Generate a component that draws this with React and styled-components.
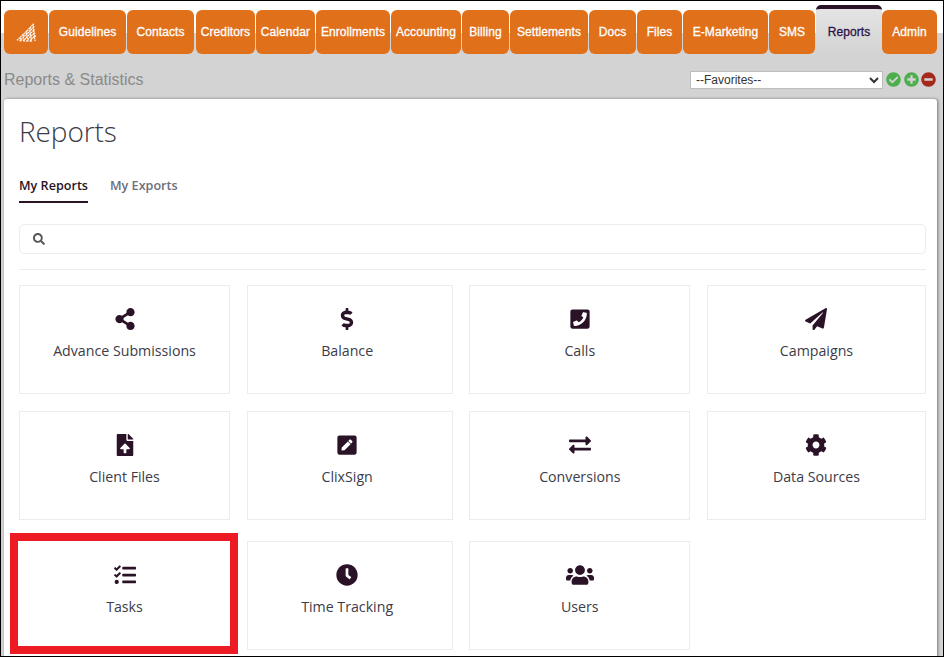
import React from "react";
import styled, { createGlobalStyle } from "styled-components";
import {
  FaShareAlt, FaDollarSign, FaPhoneSquare, FaPaperPlane, FaFileUpload, FaPenSquare,
  FaExchangeAlt, FaCog, FaTasks, FaClock, FaUsers, FaSearch, FaCheckCircle, FaPlusCircle, FaMinusCircle,
} from "react-icons/fa";

const Global = createGlobalStyle`
  html, body { margin: 0; padding: 0; background: #fff; }
  * { box-sizing: border-box; }
`;

const Frame = styled.div`
  width: 944px;
  height: 657px;
  border: 1px solid #000;
  overflow: hidden;
  background: linear-gradient(#fff 32px, #d3d3d3 32px);
  font-family: "Liberation Sans", Arial, sans-serif;
`;

const Nav = styled.nav`
  display: flex;
  align-items: flex-start;
  height: 44px;
  margin-top: 9px;
  padding-left: 3px;
`;

const Tab = styled.a`
  flex: none;
  width: ${(p) => p.$w}px;
  margin-right: ${(p) => p.$gap ?? 1}px;
  height: ${(p) => (p.$active ? 49 : 44)}px;
  margin-top: ${(p) => (p.$active ? -5 : 0)}px;
  display: flex;
  align-items: center;
  justify-content: center;
  font-size: 12px;
  font-weight: 400;
  letter-spacing: 0.08px;
  -webkit-text-stroke: 0.3px currentColor;
  color: ${(p) => (p.$active ? "#2b1248" : "#fff")};
  background: ${(p) => (p.$active ? "linear-gradient(#e4e4e4, #d3d3d3)" : "#e1701a")};
  border-top: ${(p) => (p.$active ? "4px solid #2b1327" : "none")};
  border-radius: ${(p) => (p.$active ? "5px 5px 0 0" : "6px")};
`;

const Toolbar = styled.div`
  height: 45px;
  display: flex;
  align-items: center;
  padding: 6px 7px 0 3px;
`;

const PageTitle = styled.h2`
  flex: 1;
  margin: 0;
  font-size: 16px;
  font-weight: 400;
  color: #8a8a8a;
`;

const FavSelect = styled.select`
  width: 192.5px;
  height: 18px;
  margin-right: 3.5px;
  padding: 0 0 0 1px;
  border: 1px solid #bdbdbd;
  background: #fff;
  font-family: "Liberation Sans", Arial, sans-serif;
  font-size: 12px;
  color: #333;
`;

const StatusButton = styled.span`
  display: flex;
  margin-left: 2.5px;
  color: ${(p) => p.$color};
  font-size: 15px;
  &:first-of-type { margin-left: 0; }
`;

const Panel = styled.main`
  width: 933px;
  height: 600px;
  margin-left: 3px;
  padding: 0 10px 0 15px;
  background: #fff;
  border-radius: 3px;
  box-shadow: 1px 0 3px rgba(0, 0, 0, 0.45);
  font-family: "Open Sans", sans-serif;
`;

const Title = styled.h1`
  margin: 0;
  padding-top: 13px;
  height: 73px;
  font-size: 28px;
  line-height: 38px;
  font-weight: 300;
  letter-spacing: -0.1px;
  color: #3c3c48;
`;

const Tabs = styled.div`
  display: flex;
  gap: 22px;
  height: 31px;
`;

const SubTab = styled.a`
  height: 31px;
  padding-top: 5px;
  font-size: 12.6px;
  line-height: 17px;
  font-weight: 600;
  color: ${(p) => (p.$active ? "#2b1327" : "#6b6f7c")};
  border-bottom: ${(p) => (p.$active ? "2px solid #2b1327" : "none")};
`;

const Search = styled.div`
  height: 30px;
  width: 907px;
  margin-top: 21px;
  display: flex;
  align-items: center;
  padding-left: 13px;
  border: 1px solid #ececec;
  border-radius: 5px;
  color: #555;
  font-size: 12px;
`;

const Rule = styled.hr`
  width: 907px;
  margin: 15px 0;
  border: none;
  border-top: 1px solid #ececec;
`;

const Grid = styled.div`
  display: grid;
  grid-template-columns: 211px 206px 221px 219px;
  column-gap: 16.67px;
  grid-auto-rows: 109px;
  row-gap: 17px;
`;

const Card = styled.a`
  position: relative;
  margin: ${(p) => (p.$shift ? "4px 0 -4px" : "0")};
  display: flex;
  flex-direction: column;
  align-items: center;
  padding: 21px ${(p) => (p.$offset ? 5 : 0)}px 0 0;
  border: 1px solid ${(p) => (p.$bare ? "transparent" : "#ececec")};
  color: #3c3c48;
  font-size: 14.2px;
  font-weight: 500;
`;

const IconSlot = styled.span`
  height: 24px;
  display: flex;
  align-items: center;
  justify-content: center;
  font-size: ${(p) => p.$size ?? 22}px;
  color: #2b1327;
  margin-bottom: 10px;
`;

const Label = styled.span`
  line-height: 19px;
`;

const Highlight = styled.span`
  position: absolute;
  left: -10px;
  right: -9px;
  top: -9px;
  bottom: -5px;
  border: 8px solid #ed1c24;
  pointer-events: none;
`;

const Logo = () => (
  <svg width="21" height="19" viewBox="0 0 24 22" fill="none" stroke="#fff">
    <g strokeWidth="1.5" strokeDasharray="2 .6">
      <path d="M1 20 C8 14 16 6 20 1" />
      <path d="M4 21 C10 15 17 8 21 4" />
      <path d="M8 21 C13 16 18 10 21.5 8" />
      <path d="M12 21.500 C15 17 19 13 22 11.500" />
      <path d="M16 21.500 C18 18 20 16 23 15" />
    </g>
    <g strokeWidth="1.3" strokeDasharray="2 .6">
      <path d="M20 1 C20 8 21 15 22 21" />
      <path d="M16 5 C16 11 17 17 18 21.500" />
      <path d="M12 9 C12 13 13 18 14 21.500" />
      <path d="M8 13 C8 16 9 19 10 21.500" />
      <path d="M4.500 17 C5 19 5.500 20 6 21" />
    </g>
  </svg>
);

const tabs = [
  { w: 44, label: <Logo /> },
  { w: 77, label: "Guidelines" },
  { w: 67, label: "Contacts", gap: 2 },
  { w: 59, label: "Creditors" },
  { w: 59, label: "Calendar" },
  { w: 74, label: "Enrollments" },
  { w: 70, label: "Accounting" },
  { w: 47, label: "Billing" },
  { w: 78, label: "Settlements" },
  { w: 47, label: "Docs" },
  { w: 45, label: "Files" },
  { w: 85, label: "E-Marketing" },
  { w: 46, label: "SMS" },
  { w: 66, label: "Reports", active: true, gap: 0 },
  { w: 55, label: "Admin" },
];

const cards = [
  { label: "Advance Submissions", Icon: FaShareAlt },
  { label: "Balance", Icon: FaDollarSign, offset: true },
  { label: "Calls", Icon: FaPhoneSquare },
  { label: "Campaigns", Icon: FaPaperPlane },
  { label: "Client Files", Icon: FaFileUpload },
  { label: "ClixSign", Icon: FaPenSquare, offset: true },
  { label: "Conversions", Icon: FaExchangeAlt },
  { label: "Data Sources", Icon: FaCog },
  { label: "Tasks", Icon: FaTasks, highlight: true, shift: true },
  { label: "Time Tracking", Icon: FaClock, shift: true, offset: true },
  { label: "Users", Icon: FaUsers, size: 28, shift: true },
];

export default function App() {
  return (
    <Frame>
      <Global />
      <Nav>
        {tabs.map((t, i) => (
          <Tab key={i} $w={t.w} $gap={t.gap} $active={t.active}>{t.label}</Tab>
        ))}
      </Nav>
      <Toolbar>
        <PageTitle>Reports &amp; Statistics</PageTitle>
        <FavSelect defaultValue="fav"><option value="fav">--Favorites--</option></FavSelect>
        <StatusButton $color="#4cae4c"><FaCheckCircle /></StatusButton>
        <StatusButton $color="#4cae4c"><FaPlusCircle /></StatusButton>
        <StatusButton $color="#a5291b"><FaMinusCircle /></StatusButton>
      </Toolbar>
      <Panel>
        <Title>Reports</Title>
        <Tabs>
          <SubTab $active>My Reports</SubTab>
          <SubTab>My Exports</SubTab>
        </Tabs>
        <Search><FaSearch /></Search>
        <Rule />
        <Grid>
          {cards.map(({ label, Icon, highlight, shift, offset, size }) => (
            <Card key={label} $shift={shift} $bare={highlight} $offset={offset}>
              <IconSlot $size={size}><Icon /></IconSlot>
              <Label>{label}</Label>
              {highlight && <Highlight />}
            </Card>
          ))}
        </Grid>
      </Panel>
    </Frame>
  );
}
